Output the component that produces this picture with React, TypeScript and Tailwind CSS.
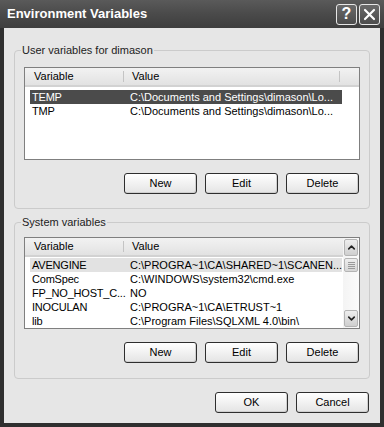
import React from 'react';
import { ChevronUp, ChevronDown } from 'lucide-react';

const font = { fontFamily: '"Liberation Sans", Arial, sans-serif' };

type Row = { name: string; value: string };

const userVars: Row[] = [
  { name: 'TEMP', value: 'C:\\Documents and Settings\\dimason\\Lo...' },
  { name: 'TMP', value: 'C:\\Documents and Settings\\dimason\\Lo...' },
];

const systemVars: Row[] = [
  { name: 'AVENGINE', value: 'C:\\PROGRA~1\\CA\\SHARED~1\\SCANEN...' },
  { name: 'ComSpec', value: 'C:\\WINDOWS\\system32\\cmd.exe' },
  { name: 'FP_NO_HOST_C...', value: 'NO' },
  { name: 'INOCULAN', value: 'C:\\PROGRA~1\\CA\\ETRUST~1' },
  { name: 'lib', value: 'C:\\Program Files\\SQLXML 4.0\\bin\\' },
];

const Button: React.FC<{ label: string }> = ({ label }) => (
  <button className="w-[73px] h-[21px] rounded-[3px] border border-[#2e2e2e] bg-gradient-to-b from-[#ffffff] to-[#e4e4e4] text-[11px] text-black shadow-[inset_-1px_-1px_0_#cfcfcf]">
    {label}
  </button>
);

const ListHeader: React.FC<{ scroll?: boolean }> = ({ scroll }) => (
  <div className="flex h-[19px] bg-gradient-to-b from-[#f2f2f2] to-[#e2e2e2] border-b-2 border-[#d2d2d2] text-[11px] text-black">
    <div className="w-[99px] pl-[9px] flex items-center border-r border-[#c4c4c4] my-[3px]">Variable</div>
    <div className={`${scroll ? 'flex-1' : 'w-[216px] border-r border-[#c4c4c4]'} pl-[8px] flex items-center my-[3px]`}>Value</div>
    {!scroll && <div className="flex-1" />}
  </div>
);

const VarRow: React.FC<{ row: Row; tone?: 'dark' | 'light' }> = ({ row, tone }) => {
  const bg = tone === 'dark' ? 'bg-[#4b4b4b] text-white' : tone === 'light' ? 'bg-[#e2e2e2] text-black' : 'text-black';
  return (
    <div className={`ml-[5px] w-[312px] h-[14px] flex items-center text-[11px] whitespace-nowrap ${bg}`}>
      <div className="w-[94px] shrink-0 pl-[2px] tracking-[-0.2px]">{row.name}</div>
      <div className="pl-[6px]">{row.value}</div>
    </div>
  );
};

const ScrollBar: React.FC = () => (
  <div className="w-[16px] flex flex-col bg-gradient-to-r from-[#f4f4f4] to-[#fbfbfb]">
    <div className="h-[17px] mx-[1px] mt-[1px] rounded-[2px] border border-[#b4b4b4] bg-gradient-to-b from-[#eeeeee] to-[#cfcfcf] flex items-center justify-center text-[#222]">
      <ChevronUp size={11} strokeWidth={3.5} />
    </div>
    <div className="h-[14px] mx-[1px] mt-[2px] rounded-[2px] border border-[#b4b4b4] bg-gradient-to-b from-[#eeeeee] to-[#d6d6d6] flex flex-col items-center justify-center gap-[1px]">
      <div className="w-[7px] h-px bg-[#9a9a9a]" />
      <div className="w-[7px] h-px bg-[#9a9a9a]" />
      <div className="w-[7px] h-px bg-[#9a9a9a]" />
      <div className="w-[7px] h-px bg-[#9a9a9a]" />
    </div>
    <div className="flex-1" />
    <div className="h-[17px] mx-[1px] mb-[1px] rounded-[2px] border border-[#b4b4b4] bg-gradient-to-b from-[#eeeeee] to-[#cfcfcf] flex items-center justify-center text-[#222]">
      <ChevronDown size={11} strokeWidth={3.5} />
    </div>
  </div>
);

const GroupBox: React.FC<{ title: string; className: string; children: React.ReactNode }> = ({ title, className, children }) => (
  <fieldset className={`border border-[#cbcbcb] rounded-[4px] px-[9px] ${className}`}>
    <legend className="-ml-[3px] px-[1px] h-[14px] leading-[14px] text-[11px] text-[#222]">{title}</legend>
    {children}
  </fieldset>
);

export default function App() {
  return (
    <div className="w-[384px] h-[427px] bg-[#2f2f2f] flex flex-col select-none" style={font}>
      {/* Title bar */}
      <div className="h-[28px] flex items-center pl-[7px] pr-[4px] bg-gradient-to-b from-[#5a5a5a] via-[#4a4a4a] to-[#3e3e3e]">
        <span className="text-white font-bold text-[13px] flex-1">Environment Variables</span>
        <div className="flex gap-[2px]">
          <div className="w-[21px] h-[21px] rounded-[3px] border border-[#e6e6e6] bg-gradient-to-b from-[#6a6a6a] to-[#4c4c4c] text-white flex items-center justify-center text-[16px] font-bold leading-none">
            ?
          </div>
          <div className="w-[21px] h-[21px] rounded-[3px] border border-[#e6e6e6] bg-gradient-to-b from-[#6a6a6a] to-[#4c4c4c] text-white flex items-center justify-center">
            <svg width="13" height="13" viewBox="0 0 13 13">
              <path d="M2 2 L11 11 M11 2 L2 11" stroke="white" strokeWidth="2.2" strokeLinecap="round" />
            </svg>
          </div>
        </div>
      </div>

      {/* Body */}
      <div className="flex-1 mx-[4px] mb-[4px] bg-[#e6e6e6] px-[10px] pt-[15px] flex flex-col">
        <GroupBox title="User variables for dimason" className="pt-[10px] pb-[14px]">
          <div className="h-[93px] border border-[#7f7f7f] bg-white flex flex-col">
            <ListHeader />
            <div className="pt-[3px]">
              <VarRow row={userVars[0]} tone="dark" />
              <VarRow row={userVars[1]} />
            </div>
          </div>
          <div className="flex justify-end gap-[8px] mt-[13px] mr-[1px]">
            <Button label="New" />
            <Button label="Edit" />
            <Button label="Delete" />
          </div>
        </GroupBox>

        <GroupBox title="System variables" className="mt-[6px] pt-[8px] pb-[15px]">
          <div className="h-[92px] border border-[#7f7f7f] bg-white flex">
            <div className="flex-1 flex flex-col">
              <ListHeader scroll />
              <div className="pt-[1px]">
                {systemVars.map((r, i) => (
                  <VarRow key={r.name} row={r} tone={i === 0 ? 'light' : undefined} />
                ))}
              </div>
            </div>
            <ScrollBar />
          </div>
          <div className="flex justify-end gap-[8px] mt-[13px] mr-[1px]">
            <Button label="New" />
            <Button label="Edit" />
            <Button label="Delete" />
          </div>
        </GroupBox>

        <div className="flex justify-end gap-[8px] mt-[13px] mr-[1px]">
          <Button label="OK" />
          <Button label="Cancel" />
        </div>
      </div>
    </div>
  );
}
